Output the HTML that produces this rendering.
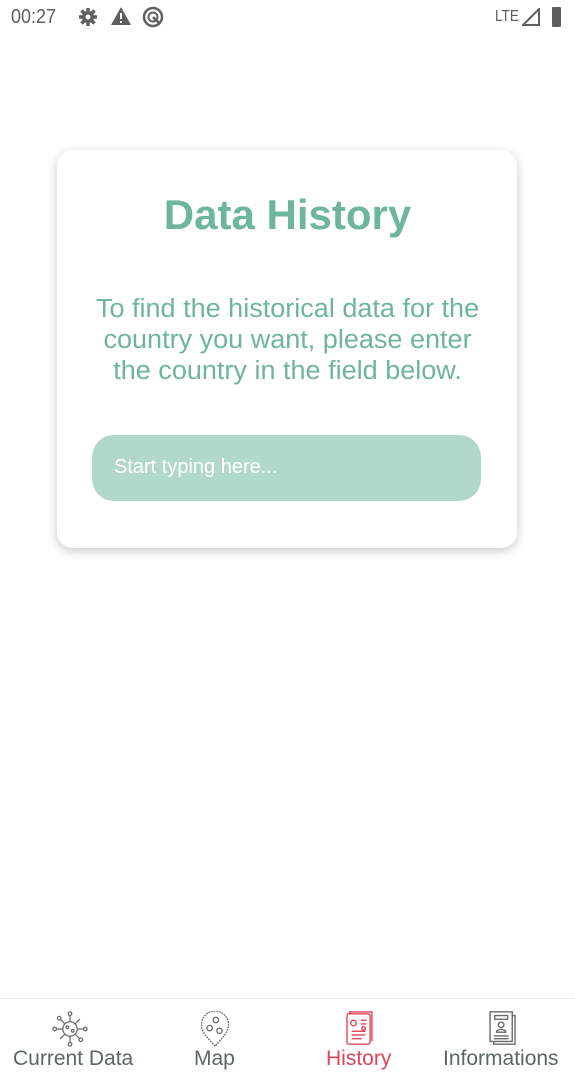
<!DOCTYPE html>
<html><head><meta charset="utf-8"><style>
*{margin:0;padding:0;box-sizing:border-box}
body{width:575px;height:1080px;background:#fff;position:relative;overflow:hidden;font-family:"Liberation Sans",Roboto,sans-serif}
.sb{position:absolute;top:0;left:0;width:575px;height:36px;color:#5f5f5f}
.card{position:absolute;left:57px;top:150px;width:460px;height:398px;border-radius:16px;background:#fff;box-shadow:0 3px 10px rgba(0,0,0,.22)}
.t{position:absolute;left:0;width:100%;top:191px;text-align:center;font-size:42px;font-weight:bold;color:#6db59b}
.p{position:absolute;left:0;width:575px;top:294px;text-align:center;font-size:25.5px;line-height:31px;color:#6db59b;transform:scaleX(1.06);transform-origin:287px 0}
.in{position:absolute;left:92px;top:435px;width:389px;height:66px;border-radius:22px;background:#b2d8cb}
.in span{position:absolute;left:22px;top:21px;color:#fff;font-size:20px;white-space:nowrap}
.nav{position:absolute;left:0;top:998px;width:575px;height:82px;border-top:1px solid #f0f0f0;background:#fff}
.lb{position:absolute;top:1047px;font-size:21px;color:#5d6664;white-space:nowrap}
</style></head><body>
<div class="sb">
<span style="position:absolute;left:11px;top:6px;font-size:20px;transform:scaleX(0.9);transform-origin:0 0">00:27</span>
<svg style="position:absolute;left:78px;top:7px" width="20" height="20" viewBox="0 0 20 20"><circle cx="10" cy="10" r="6" fill="#5f5f5f"/><g stroke="#5f5f5f" stroke-width="3.5"><line x1="10" y1="1" x2="10" y2="19"/><line x1="1" y1="10" x2="19" y2="10"/><line x1="3.5" y1="3.5" x2="16.5" y2="16.5"/><line x1="16.5" y1="3.5" x2="3.5" y2="16.5"/></g><circle cx="10" cy="10" r="2.5" fill="#fff"/></svg>
<svg style="position:absolute;left:111px;top:7px" width="20" height="19" viewBox="0 0 20 19"><path d="M10 0L20 18H0Z" fill="#5f5f5f"/><rect x="9" y="6" width="2" height="6" fill="#fff"/><rect x="9" y="14" width="2" height="2" fill="#fff"/></svg>
<svg style="position:absolute;left:142px;top:6px" width="22" height="22" viewBox="0 0 22 22"><circle cx="11" cy="11" r="9" fill="none" stroke="#5f5f5f" stroke-width="2.5"/><circle cx="11" cy="11" r="4.5" fill="none" stroke="#5f5f5f" stroke-width="2"/><line x1="11" y1="11" x2="18" y2="18" stroke="#5f5f5f" stroke-width="2.5"/></svg>
<span style="position:absolute;left:495px;top:8px;font-size:16px;transform:scaleX(0.85);transform-origin:0 0">LTE</span>
<svg style="position:absolute;left:522px;top:8px" width="18" height="18"><path d="M17 1V17H1Z" fill="none" stroke="#5f5f5f" stroke-width="2"/></svg>
<div style="position:absolute;left:552px;top:7px;width:9px;height:20px;background:#5f5f5f;border-radius:1px"></div>
</div>
<div class="card"></div>
<div class="t">Data History</div>
<div class="p">To find the historical data for the<br>country you want, please enter<br>the country in the field below.</div>
<div class="in"><span>Start typing here...</span></div>
<div class="nav"></div>
<svg style="position:absolute;left:52px;top:1011px" width="36" height="36" viewBox="0 0 40 40" fill="none" stroke="#6a6a6a" stroke-width="1.4"><circle cx="20" cy="20" r="8"/><circle cx="17" cy="18" r="1.5"/><circle cx="23" cy="22" r="1.5"/><path d="M20 12V5M20 28V35M12 20H5M28 20H35M14 14L9 9M26 26L31 31M26 14L31 9M14 26L9 31"/><circle cx="20" cy="3" r="2"/><circle cx="3" cy="20" r="2"/><circle cx="37" cy="20" r="2"/><circle cx="20" cy="37" r="2"/><circle cx="8" cy="8" r="2"/><circle cx="32" cy="32" r="2"/></svg>
<svg style="position:absolute;left:200px;top:1011px" width="30" height="36" viewBox="0 0 32 40" fill="none" stroke="#6a6a6a" stroke-width="1.4"><path d="M16 39C8 30 1 24 1 15A15 15 0 0 1 31 15C31 24 24 30 16 39Z" stroke-dasharray="2 1"/><circle cx="17" cy="10" r="3"/><circle cx="10" cy="19" r="3"/><circle cx="21" cy="22" r="3"/></svg>
<svg style="position:absolute;left:345px;top:1011px" width="28" height="35" viewBox="0 0 30 38" fill="none" stroke="#e0435a" stroke-width="1.5"><rect x="2" y="3" width="25" height="33" rx="2"/><path d="M5 3V1H29V33"/><circle cx="9" cy="13" r="3"/><path d="M17 10H23M17 14H23M7 22H22M7 26H22M7 30H18"/><circle cx="20" cy="19" r="2"/></svg>
<svg style="position:absolute;left:488px;top:1010px" width="30" height="37" viewBox="0 0 32 40" fill="none" stroke="#6a6a6a" stroke-width="1.5"><rect x="2" y="2" width="24" height="32"/><path d="M26 6H29V37H6V34"/><rect x="7" y="6" width="14" height="4"/><circle cx="14" cy="16" r="3"/><path d="M9 24C9 20 19 20 19 24ZM6 28H22M6 31H22"/></svg>
<div class="lb" style="left:13px">Current Data</div>
<div class="lb" style="left:194px">Map</div>
<div class="lb" style="left:326px;color:#e0435a">History</div>
<div class="lb" style="left:443px">Informations</div>
</body></html>
